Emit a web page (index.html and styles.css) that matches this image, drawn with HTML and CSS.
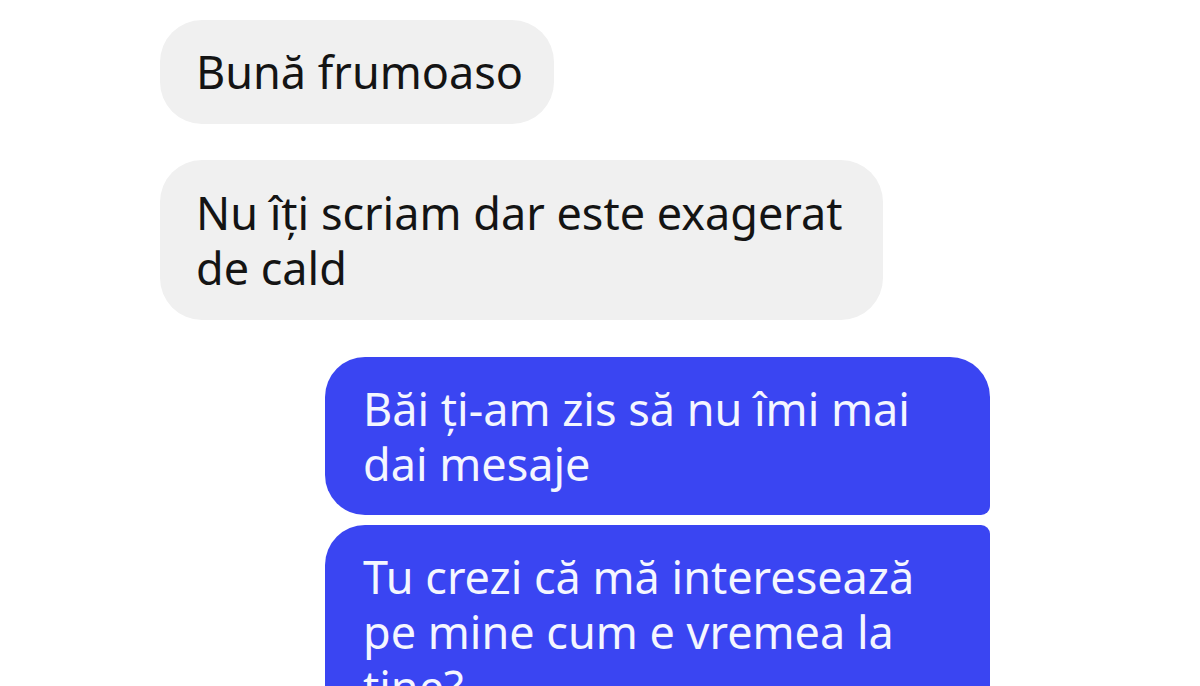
FILE: index.html
```html
<!DOCTYPE html>
<html lang="ro">
<head>
<meta charset="utf-8">
<title>Chat</title>
<link rel="stylesheet" href="styles.css">
</head>
<body>
<div class="chat">
  <div class="msg in first">Bună frumoaso</div>
  <div class="msg in">Nu îți scriam dar este exagerat de cald</div>
  <div class="msg out top">Băi ți-am zis să nu îmi mai dai mesaje</div>
  <div class="msg out mid">Tu crezi că mă interesează pe mine cum e vremea la tine?</div>
</div>
</body>
</html>
```
FILE: styles.css
```css
html, body {
  margin: 0;
  padding: 0;
  background: #ffffff;
  height: 686px;
  overflow: hidden;
}
.chat {
  display: flex;
  flex-direction: column;
  padding: 20px 210px 0 160px;
  font-family: "Noto Sans", "Open Sans", sans-serif;
  font-size: 45px;
  line-height: 55px;
}
.msg {
  box-sizing: border-box;
  padding: 25px 36px;
}
.in {
  align-self: flex-start;
  background: #f0f0f0;
  color: #141414;
  border-radius: 42px;
  margin-top: 36px;
}
.in.first {
  margin-top: 0;
  padding: 24px 31px 25px 36px;
}
.in:nth-child(2) {
  max-width: 723px;
}
.out {
  align-self: flex-end;
  width: 665px;
  background: #3a45f2;
  color: #f4f6ff;
  padding: 24px 38px;
}
.out.top {
  margin-top: 37px;
  border-radius: 40px 40px 9px 40px;
}
.out.mid {
  margin-top: 10px;
  border-radius: 40px 9px 9px 40px;
}
```
